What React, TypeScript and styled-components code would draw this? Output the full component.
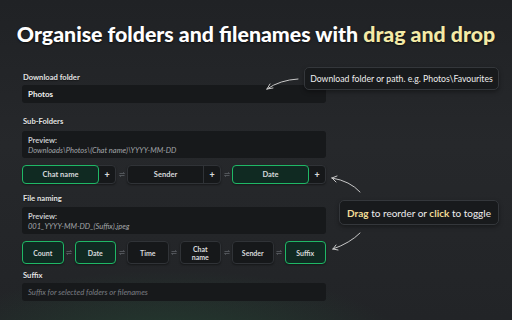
import React from "react";
import styled, { createGlobalStyle } from "styled-components";

const Global = createGlobalStyle`
  html, body { margin: 0; padding: 0; }
  body {
    width: 512px; height: 320px; overflow: hidden;
    background:
      radial-gradient(ellipse 240px 80px at 170px 350px, rgba(40, 120, 70, 0.3), rgba(40,120,70,0) 100%),
      linear-gradient(180deg, #202225 0%, #26282b 45%, #222427 100%);
    font-family: Lato, "Open Sans", sans-serif;
    color: #e8e8e8;
  }
`;

const Page = styled.div`
  position: relative;
  width: 512px;
  height: 320px;
`;

const Title = styled.h1`
  margin: 0;
  height: 68px;
  display: flex;
  align-items: center;
  justify-content: center;
  font-family: Lato, sans-serif;
  font-size: 21.3px;
  font-weight: 900;
  color: #ffffff;
  text-shadow: 0 1px 2px rgba(0,0,0,0.6);
  white-space: nowrap;
`;

const Hi = styled.span`
  color: #f4eaa6;
`;

const Form = styled.div`
  width: 304px;
  margin-left: 22px;
  display: flex;
  flex-direction: column;
`;

const Label = styled.div<{ $mt: number; $mb: number }>`
  font-size: 7.6px;
  line-height: 10px;
  font-weight: 700;
  color: #e4e4e4;
  margin-top: ${(p) => p.$mt}px;
  margin-bottom: ${(p) => p.$mb}px;
  padding-left: 1px;
  text-shadow: 0 1px 1px rgba(0,0,0,0.5);
`;

const Input = styled.div<{ $placeholder?: boolean }>`
  height: 18px;
  display: flex;
  align-items: center;
  padding: 0 6px;
  background: #17191b;
  border-radius: 3px;
  font-size: ${(p) => (p.$placeholder ? 7.7 : 8)}px;
  color: ${(p) => (p.$placeholder ? "#7b7e83" : "#f0f0f0")};
  font-style: ${(p) => (p.$placeholder ? "italic" : "normal")};
  font-weight: ${(p) => (p.$placeholder ? 400 : 700)};
`;

const Preview = styled.div`
  height: 27px;
  box-sizing: border-box;
  padding: 5px 6px 0;
  background: #17191b;
  border-radius: 3px;
  display: flex;
  flex-direction: column;
  font-size: 7.5px;
  line-height: 9.5px;
`;

const PreviewHead = styled.div`
  color: #c9cbce;
  font-weight: 700;
`;

const PreviewPath = styled.div`
  color: #a3a6aa;
  font-style: italic;
`;

const ChipRow = styled.div<{ $mt: number; $h: number }>`
  display: flex;
  align-items: stretch;
  margin-top: ${(p) => p.$mt}px;
  height: ${(p) => p.$h}px;
`;

const Group = styled.div`
  flex: 1;
  display: flex;
  background: #16181a;
  border: 1px solid #303337;
  border-radius: 4px;
  box-shadow: 0 1px 2px rgba(0,0,0,0.4);
`;

const GroupLabel = styled.div<{ $active?: boolean }>`
  flex: 1;
  display: flex;
  align-items: center;
  justify-content: center;
  font-size: 7.5px;
  font-weight: 700;
  color: #d8dadc;
  margin: ${(p) => (p.$active ? "-1px 0 -1px -1px" : "0")};
  border: ${(p) => (p.$active ? "1.5px solid #1fb866" : "0")};
  border-right: ${(p) => (p.$active ? "1.5px solid #1fb866" : "1px solid #303337")};
  border-radius: ${(p) => (p.$active ? "4px" : "4px 0 0 4px")};
  background: ${(p) => (p.$active ? "#102a22" : "transparent")};
`;

const Plus = styled.div`
  width: 16px;
  display: flex;
  align-items: center;
  justify-content: center;
  font-size: 9px;
  font-weight: 900;
  color: #d8dadc;
`;

const Swap = styled.div`
  width: 11px;
  display: flex;
  align-items: center;
  justify-content: center;
  flex-shrink: 0;
`;

const Chip = styled.div<{ $active?: boolean }>`
  flex: 1;
  display: flex;
  align-items: center;
  justify-content: center;
  text-align: center;
  font-size: 7px;
  line-height: 8px;
  font-weight: 700;
  color: #d8dadc;
  border-radius: 4px;
  box-sizing: border-box;
  background: ${(p) => (p.$active ? "#102a22" : "#16181a")};
  border: ${(p) => (p.$active ? "1.5px solid #1fb866" : "1px solid #303337")};
  box-shadow: 0 1px 2px rgba(0,0,0,0.4);
`;

const Callout = styled.div<{ $x: number; $y: number; $w: number; $h: number; $fs: number }>`
  position: absolute;
  left: ${(p) => p.$x}px;
  top: ${(p) => p.$y}px;
  width: ${(p) => p.$w}px;
  height: ${(p) => p.$h}px;
  box-sizing: border-box;
  display: flex;
  align-items: center;
  justify-content: center;
  background: #181a1c;
  border: 1px solid #34373b;
  border-radius: 5px;
  font-size: ${(p) => p.$fs}px;
  color: #eeeeee;
  white-space: nowrap;
  box-shadow: 0 2px 4px rgba(0,0,0,0.35);
`;

const Yel = styled.span`
  color: #f2de97;
  font-weight: 700;
`;

const ArrowLayer = styled.svg`
  position: absolute;
  left: 0;
  top: 0;
  pointer-events: none;
`;

const SwapIcon = () => (
  <svg width="6" height="5" viewBox="0 0 6 5">
    <path d="M0.5 1.5h5M4 0.3l1.5 1.2M5.5 3.5h-5M2 4.7L0.5 3.5" stroke="#5d6166" strokeWidth="0.8" fill="none" />
  </svg>
);

const groups = [
  { label: "Chat name", active: true },
  { label: "Sender", active: false },
  { label: "Date", active: true },
];

const chips: { label: React.ReactNode; active: boolean }[] = [
  { label: "Count", active: true },
  { label: "Date", active: true },
  { label: "Time", active: false },
  { label: <>Chat<br />name</>, active: false },
  { label: "Sender", active: false },
  { label: "Suffix", active: true },
];

export default function App() {
  return (
    <Page>
      <Global />
      <Title>
        Organise folders and filenames with&nbsp;<Hi>drag and drop</Hi>
      </Title>
      <Form>
        <Label $mt={4} $mb={3}>Download folder</Label>
        <Input>Photos</Input>
        <Label $mt={13} $mb={5}>Sub-Folders</Label>
        <Preview>
          <PreviewHead>Preview:</PreviewHead>
          <PreviewPath>Downloads\Photos\(Chat name)\YYYY-MM-DD</PreviewPath>
        </Preview>
        <ChipRow $mt={7} $h={19}>
          {groups.map((g, i) => (
            <React.Fragment key={g.label}>
              {i > 0 && (
                <Swap>
                  <SwapIcon />
                </Swap>
              )}
              <Group>
                <GroupLabel $active={g.active}>{g.label}</GroupLabel>
                <Plus>+</Plus>
              </Group>
            </React.Fragment>
          ))}
        </ChipRow>
        <Label $mt={9} $mb={4}>File naming</Label>
        <Preview>
          <PreviewHead>Preview:</PreviewHead>
          <PreviewPath>001_YYYY-MM-DD_(Suffix).jpeg</PreviewPath>
        </Preview>
        <ChipRow $mt={7} $h={23}>
          {chips.map((c, i) => (
            <React.Fragment key={i}>
              {i > 0 && (
                <Swap>
                  <SwapIcon />
                </Swap>
              )}
              <Chip $active={c.active}>{c.label}</Chip>
            </React.Fragment>
          ))}
        </ChipRow>
        <Label $mt={6} $mb={3}>Suffix</Label>
        <Input $placeholder>Suffix for selected folders or filenames</Input>
      </Form>

      <Callout $x={304} $y={67} $w={195} $h={23} $fs={8.7}>
        Download folder or path. e.g. Photos\Favourites
      </Callout>
      <Callout $x={339} $y={200} $w={160} $h={25} $fs={10}>
        <Yel>Drag</Yel>&nbsp;to reorder or&nbsp;<Yel>click</Yel>&nbsp;to toggle
      </Callout>

      <ArrowLayer width="512" height="320" viewBox="0 0 512 320">
        <g stroke="#c8c8c8" strokeWidth="1" fill="none" strokeLinecap="round">
          <path d="M298 79 Q280 80 267 89" />
          <path d="M267 89 L273 88 M267 89 L270 84" />
          <path d="M360 192 Q350 181 332 178" />
          <path d="M332 178 L337 176 M332 178 L336 182" />
          <path d="M360 233 Q350 243 333 249" />
          <path d="M333 249 L336 245 M333 249 L338 250" />
        </g>
      </ArrowLayer>
    </Page>
  );
}
